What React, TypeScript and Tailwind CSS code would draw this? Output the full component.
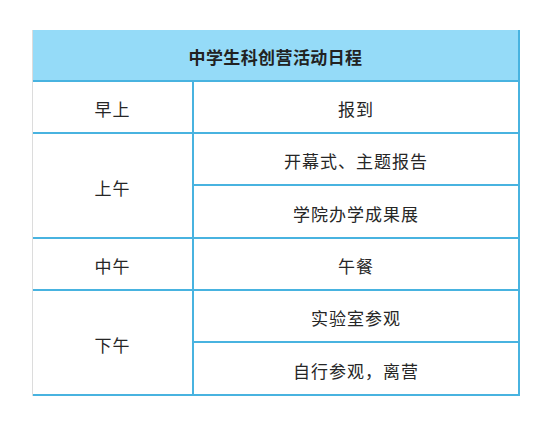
import React from "react";

const font = { fontFamily: '"Noto Sans CJK SC", "Noto Sans", sans-serif' };

function Cell({ text, last, tall }: { text: string; last?: boolean; tall?: boolean }) {
  return (
    <div
      className={`flex items-center justify-center pt-[3px] text-[17px] leading-none tracking-[1px] text-[#262626] ${
        last ? (tall ? "h-[51px]" : "h-[50px]") : "h-[52px] border-b-2 border-[#48b3e0]"
      }`}
    >
      {text}
    </div>
  );
}

function Group({ label, items }: { label: string; items: string[] }) {
  const tall = items.length > 1;
  return (
    <div className="flex border-b-2 border-[#48b3e0]">
      <div className="flex w-[161px] shrink-0 items-center justify-center border-r-2 border-[#48b3e0] pt-[3px] text-[17px] leading-none tracking-[1px] text-[#262626]">
        {label}
      </div>
      <div className="flex flex-1 flex-col">
        {items.map((t, i) => (
          <Cell key={t} text={t} last={i === items.length - 1} tall={tall} />
        ))}
      </div>
    </div>
  );
}

export default function App() {
  return (
    <div className="min-h-[423px] w-[542px] bg-white pt-[30px]" style={font}>
      <div className="ml-[32px] w-[488px] border-l border-r-2 border-l-[#dcdcdc] border-r-[#48b3e0]">
        <div className="flex h-[52px] items-center justify-center border-b-2 border-[#48b3e0] bg-[#95dbf8] pt-[3px] text-[17px] font-bold leading-none tracking-[0.4px] text-[#222]">
          中学生科创营活动日程
        </div>
        <Group label="早上" items={["报到"]} />
        <Group label="上午" items={["开幕式、主题报告", "学院办学成果展"]} />
        <Group label="中午" items={["午餐"]} />
        <Group label="下午" items={["实验室参观", "自行参观，离营"]} />
      </div>
    </div>
  );
}
